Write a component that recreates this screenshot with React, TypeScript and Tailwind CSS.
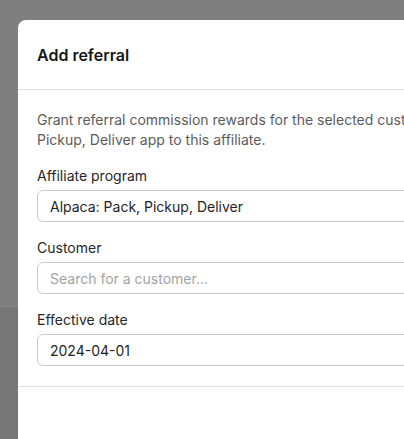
const inputCls =
  "h-8 w-full rounded-md border border-[#c9c9c9] bg-white px-3 text-[14px] text-[#1f1f1f] outline-none placeholder:text-[#a3a3a3]";

export default function App() {
  return (
    <div
      className="relative h-[439px] w-[404px] overflow-hidden bg-[#7f7f7f]"
      style={{ fontFamily: "Inter, 'Noto Sans', sans-serif" }}
    >
      <div className="absolute left-0 right-0 top-[306px] h-full border-t border-[#858585] bg-[#777777]" />
      <div className="absolute left-[18px] top-[20px] w-[620px] rounded-lg bg-white">
        <div className="border-b border-[#dedede] px-[19px] pb-[22px] pt-[23px]">
          <h2 className="text-[16px] font-semibold leading-6 text-[#161616]">Add referral</h2>
        </div>
        <div className="flex flex-col px-[19px] pb-5 pt-5">
          <p className="whitespace-nowrap text-[14px] leading-5 text-[#5c5c5c]">
            Grant referral commission rewards for the selected customer's purchases of the Alpaca: Pack,
            <br />
            Pickup, Deliver app to this affiliate.
          </p>
          <label className="mt-4 flex flex-col gap-1">
            <span className="text-[14px] leading-5 text-[#262626]">Affiliate program</span>
            <div className={`${inputCls} flex items-center`}>Alpaca: Pack, Pickup, Deliver</div>
          </label>
          <label className="mt-4 flex flex-col gap-1">
            <span className="text-[14px] leading-5 text-[#262626]">Customer</span>
            <input className={inputCls} placeholder="Search for a customer..." />
          </label>
          <label className="mt-4 flex flex-col gap-1">
            <span className="text-[14px] leading-5 text-[#262626]">Effective date</span>
            <input className={inputCls} defaultValue="2024-04-01" />
          </label>
        </div>
        <div className="h-[120px] border-t border-[#dedede]" />
      </div>
    </div>
  );
}
